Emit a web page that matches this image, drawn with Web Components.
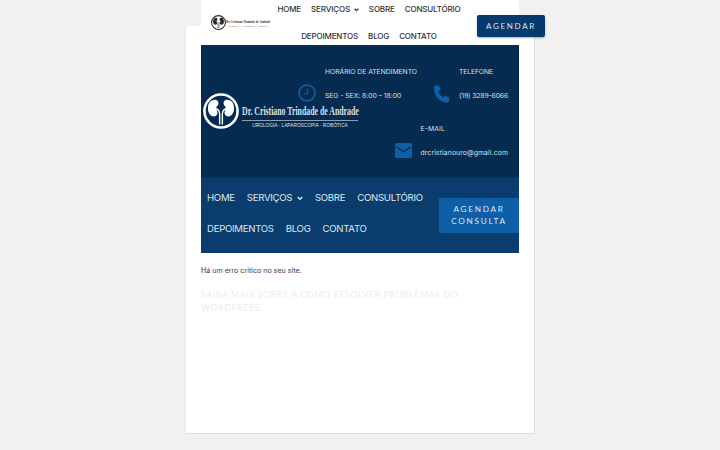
<!DOCTYPE html>
<html lang="pt-BR">
<head>
<meta charset="utf-8">
<title>Erro</title>
<style>
  html, body { margin: 0; height: 450px; overflow: hidden; background: #f1f1f1; }
  body { font-family: Inter, "Liberation Sans", sans-serif; }
</style>
</head>
<body>
<site-header></site-header>
<die-card>
  <hero-band></hero-band>
  <main-nav></main-nav>
  <error-note></error-note>
</die-card>

<script>
const KIDNEY = "M13 7.500C8 7.500 5.500 12 5.500 17c0 5 2.500 9 6.500 9 3 0 4.500-2 4-4.500-.4-2-1.500-3-1.500-4.500s1.500-2.500 2.300-4C18 10 16 7.500 13 7.500z";
const KIDNEYS = `
  <circle cx="20" cy="20" r="18.400" fill="var(--gap)" stroke="var(--ring)" stroke-width="2.800"/>
  <g><path fill="var(--ring)" d="${KIDNEY}"/>
  <path fill="none" stroke="var(--ring)" stroke-width="1.500" d="M14.500 17.500c2.800.8 4 3 4 6.500v11"/></g>
  <g transform="matrix(-1 0 0 1 40 0)"><path fill="var(--ring)" d="${KIDNEY}"/>
  <path fill="none" stroke="var(--ring)" stroke-width="1.500" d="M14.500 17.500c2.800.8 4 3 4 6.500v11"/></g>`;

class SiteHeader extends HTMLElement {
  constructor() {
    super();
    this.attachShadow({mode: "open"}).innerHTML = `
    <style>
      :host {
        position: absolute; top: 0; left: 201px; width: 318px; height: 45px;
        display: flex; align-items: flex-start; background: #fff; color: #333;
      }
      brand-logo { margin: 15px 0 0 10px; --ring: #2a2a2a; --gap: #fff; flex: none; }
      .links { width: 190px; margin-left: 3px; flex: none; display: flex; flex-wrap: wrap; justify-content: center; column-gap: 10px; }
      nav-link { font-size: 8px; letter-spacing: -.15px; font-weight: 500; height: 27px; line-height: 18px; }
      cta-link { position: absolute; left: 276px; top: 15px; width: 68px; height: 22px; background: #063a6c;
        border-radius: 2px; box-shadow: 0 1px 2px rgba(0,0,0,.3); color: #dce6f0; font-size: 8px; letter-spacing: 1.700px; }
    </style>
    <brand-logo small></brand-logo>
    <div class="links">
      <nav-link>HOME</nav-link>
      <nav-link chevron>SERVIÇOS</nav-link>
      <nav-link>SOBRE</nav-link>
      <nav-link>CONSULTÓRIO</nav-link>
      <nav-link>DEPOIMENTOS</nav-link>
      <nav-link>BLOG</nav-link>
      <nav-link>CONTATO</nav-link>
    </div>
    <cta-link>AGENDAR</cta-link>`;
  }
}

class BrandLogo extends HTMLElement {
  constructor() {
    super();
    const small = this.hasAttribute("small");
    this.attachShadow({mode: "open"}).innerHTML = `
    <style>
      :host { display: flex; align-items: center; }
      svg { width: ${small ? 15 : 36}px; height: ${small ? 15 : 36}px; flex: none; }
      .text { margin: ${small ? "1px 0 0 0" : "11px 0 0 3px"}; font-family: "Liberation Serif", serif; }
      .name { display: block; width: ${small ? 45 : 116}px; white-space: nowrap; font-weight: bold;
        font-size: ${small ? 4.800 : 12.600}px; line-height: ${small ? 6 : 14}px; padding-bottom: ${small ? 0 : 2}px;
        transform: scaleX(.62); transform-origin: left; }
      .tag { display: block; font-family: "Liberation Sans", sans-serif; white-space: nowrap; text-align: center;
        font-size: ${small ? 2 : 4.800}px; line-height: ${small ? 3 : 9}px; ${small ? "color:#777;" : ""} }
      .tag.rule { border-top: ${small ? 0 : 1}px solid rgba(255,255,255,.55); }
    </style>
    <svg viewBox="0 0 40 40">${KIDNEYS}</svg>
    <div class="text">
      <span class="name">Dr. Cristiano Trindade de Andrade</span>
      <span class="tag rule">UROLOGIA · LAPAROSCOPIA · ROBÓTICA</span>
    </div>`;
  }
}

class NavLink extends HTMLElement {
  constructor() {
    super();
    const chev = this.hasAttribute("chevron") ? `<svg viewBox="0 0 10 8"><path d="M1.200 1.500 5 5.400l3.800-3.900" fill="none" stroke="currentColor" stroke-width="2.400"/></svg>` : "";
    this.attachShadow({mode: "open"}).innerHTML = `
    <style>
      :host { display: inline-flex; align-items: flex-start; white-space: nowrap; }
      svg { width: .62em; height: .5em; margin: calc((1lh - .5em) / 2 + .5px) 0 0 .5em; }
    </style>
    <slot></slot>${chev}`;
  }
}

class CtaLink extends HTMLElement {
  constructor() {
    super();
    this.attachShadow({mode: "open"}).innerHTML = `
    <style>
      :host { display: flex; box-sizing: border-box; align-items: center; justify-content: center; text-align: center; font-family: Lato, "Liberation Sans", sans-serif; }
    </style>
    <slot></slot>`;
  }
}

class DieCard extends HTMLElement {
  constructor() {
    super();
    this.attachShadow({mode: "open"}).innerHTML = `
    <style>
      :host {
        display: block; box-sizing: border-box; width: 350px; height: 409px; margin: 25px 0 0 185px;
        padding: 19px 15px 0; background: #fff; border: 1px solid #dcdee0; border-top-color: #f1f1f1; border-left-color: #e6e7e8;
      }
    </style>
    <slot></slot>`;
  }
}

class HeroBand extends HTMLElement {
  constructor() {
    super();
    this.attachShadow({mode: "open"}).innerHTML = `
    <style>
      :host { display: grid; height: 132px; background: #052b50; color: #d8e0e8; --ring: #fff; --gap: #052b50; }
      brand-logo { grid-area: 1 / 1; align-self: center; justify-self: start; margin-left: 2px; }
      .info { grid-area: 1 / 1; display: flex; flex-wrap: wrap; justify-content: flex-end; align-content: flex-start;
        padding: 21px 11px 0 0; column-gap: 16px; row-gap: 19.500px; }
    </style>
    <brand-logo></brand-logo>
    <div class="info">
      <info-item icon="clock" label="HORÁRIO DE ATENDIMENTO" value="SEG - SEX: 8:00 – 18:00" style="letter-spacing:-.03px"></info-item>
      <info-item icon="phone" label="TELEFONE" value="(19) 3289-6066" style="letter-spacing:-.12px"></info-item>
      <info-item icon="mail" label="E-MAIL" value="drcristianouro@gmail.com" style="letter-spacing:.13px"></info-item>
    </div>`;
  }
}

const ICONS = {
  clock: `<svg width="18" height="18" viewBox="0 0 18 18" style="margin-top:18px"><circle cx="9" cy="9" r="8" fill="none" stroke="#0e5fa8" stroke-width="1.600"/><path d="M9.500 4.500v5H6" fill="none" stroke="#0e5fa8" stroke-width="1.200"/></svg>`,
  phone: `<svg width="17" height="18" viewBox="0 0 17 18" style="margin-top:19px"><path fill="#0e5fa8" d="M2.500.500 5.500 0l2 4.500-2 1.800c.7 2.600 2.300 4.600 4.800 6l2-1.800 4.200 2.300-.6 3.400c-.2.900-1 1.500-2 1.500C6.500 17.500.500 10 .800 2.300c0-.9.700-1.600 1.700-1.800z"/></svg>`,
  mail: `<svg width="17" height="15" viewBox="0 0 17 15" style="margin-top:20px"><rect width="17" height="15" rx="1.500" fill="#0e5fa8"/><path d="M1 3.500 8.500 9 16 3.500" fill="none" stroke="#052b50" stroke-width="1.300"/></svg>`
};

class InfoItem extends HTMLElement {
  constructor() {
    super();
    this.attachShadow({mode: "open"}).innerHTML = `
    <style>
      :host { display: flex; column-gap: 9px; align-items: flex-start; }
      svg { flex: none; display: block; }
      .t { display: flex; flex-direction: column; row-gap: 12px; font-size: 6.800px; line-height: 12px; white-space: nowrap; }
    </style>
    ${ICONS[this.getAttribute("icon")]}
    <div class="t"><span>${this.getAttribute("label")}</span><span>${this.getAttribute("value")}</span></div>`;
  }
}

class MainNav extends HTMLElement {
  constructor() {
    super();
    this.attachShadow({mode: "open"}).innerHTML = `
    <style>
      :host { display: flex; height: 76px; background: #0a3d6e; border-top: 1px solid #07355f; box-sizing: border-box; color: #dfe7ef; }
      .links { width: 232px; padding: 0 0 0 6px; margin-top: 10px; display: flex; flex-wrap: wrap; align-content: flex-start; column-gap: 12px; }
      nav-link { font-size: 9.600px; letter-spacing: -.28px; line-height: 20px; height: 31px; }
      cta-link { margin: 20px 0 0 auto; width: 80px; height: 35px; padding-bottom: 2px; background: #0e5fa8; color: #dce8f3; font-size: 8.200px; letter-spacing: 1.700px; line-height: 12px; }
    </style>
    <div class="links">
      <nav-link>HOME</nav-link>
      <nav-link chevron>SERVIÇOS</nav-link>
      <nav-link>SOBRE</nav-link>
      <nav-link>CONSULTÓRIO</nav-link>
      <nav-link>DEPOIMENTOS</nav-link>
      <nav-link>BLOG</nav-link>
      <nav-link>CONTATO</nav-link>
    </div>
    <cta-link>AGENDAR<br>CONSULTA</cta-link>`;
  }
}

class ErrorNote extends HTMLElement {
  constructor() {
    super();
    this.attachShadow({mode: "open"}).innerHTML = `
    <style>
      :host { display: block; }
      p { margin: 12px 0 0; font-size: 7.100px; line-height: 12px; color: #3a3a3a; }
      h2 { margin: 11px 0 0; font: 8.800px/13px Lato, "Liberation Sans", sans-serif; letter-spacing: .58px; color: #ececec; }
    </style>
    <p>Há um erro crítico no seu site.</p>
    <h2>SAIBA MAIS SOBRE A COMO RESOLVER PROBLEMAS DO WORDPRESS.</h2>`;
  }
}

customElements.define("brand-logo", BrandLogo);
customElements.define("nav-link", NavLink);
customElements.define("cta-link", CtaLink);
customElements.define("info-item", InfoItem);
customElements.define("site-header", SiteHeader);
customElements.define("die-card", DieCard);
customElements.define("hero-band", HeroBand);
customElements.define("main-nav", MainNav);
customElements.define("error-note", ErrorNote);
</script>
</body>
</html>
